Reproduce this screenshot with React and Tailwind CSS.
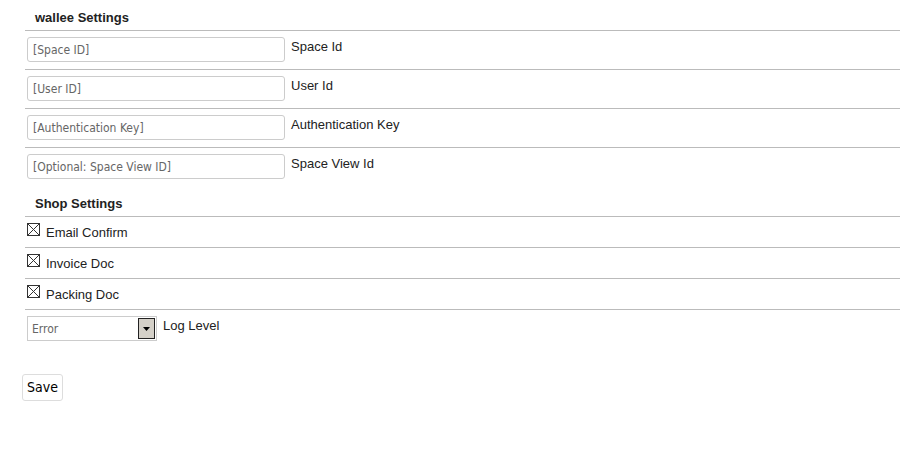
const fields = [
  { ph: '[Space ID]', label: 'Space Id' },
  { ph: '[User ID]', label: 'User Id' },
  { ph: '[Authentication Key]', label: 'Authentication Key' },
  { ph: '[Optional: Space View ID]', label: 'Space View Id' },
]

const checks = ['Email Confirm', 'Invoice Doc', 'Packing Doc']

const inputFont = "font-['DejaVu_Sans_Condensed','DejaVu_Sans',sans-serif]"

function CrossBox() {
  return (
    <svg width="13" height="13" viewBox="0 0 13 13" className="shrink-0">
      <rect x="0.5" y="0.5" width="12" height="12" fill="white" stroke="#333" />
      <path d="M1 1L12 12M12 1L1 12" stroke="#333" strokeWidth="1" />
    </svg>
  )
}

export default function App() {
  return (
    <div className="w-[900px] h-[450px] bg-white font-['Liberation_Sans',Arial,sans-serif] text-[13px] text-[#222]">
      <div className="pl-[25px]">
        <h3 className="pl-[10px] pt-[10px] h-[31px] font-bold text-[13px] leading-[15px] border-b border-[#bbb]">
          wallee Settings
        </h3>
        <div className="divide-y divide-[#bbb]">
          {fields.map((f) => (
            <div key={f.label} className="h-[39px] flex items-start pl-[2px] pt-[6px]">
              <input
                placeholder={f.ph}
                className={`w-[258px] h-[25px] px-[5px] border border-[#ccc] rounded-[3px] text-[12px] placeholder:text-[#666] outline-none ${inputFont}`}
              />
              <span className="ml-[6px] leading-[15px] pt-[2px]">{f.label}</span>
            </div>
          ))}
        </div>
        <h3 className="pl-[10px] pt-[9px] h-[30px] font-bold text-[13px] leading-[15px] border-b border-[#bbb]">
          Shop Settings
        </h3>
        {checks.map((c) => (
          <div key={c} className="h-[31px] border-b border-[#bbb] flex items-start pl-[2px] pt-[6px] gap-[6px]">
            <CrossBox />
            <span className="leading-[15px] pt-[2px]">{c}</span>
          </div>
        ))}
        <div className="flex items-start pl-[2px] pt-[6px]">
          <div className={`w-[130px] h-[25px] border border-[#ccc] flex items-center justify-between pl-[4px] pr-[1px] text-[12px] text-[#666] ${inputFont}`}>
            <span>Error</span>
            <span className="w-[17px] h-[21px] bg-[#d4d0c8] border border-[#222] flex items-center justify-center">
              <svg width="7" height="4" viewBox="0 0 7 4"><path d="M0 0H7L3.5 4Z" fill="#000" /></svg>
            </span>
          </div>
          <span className="ml-[6px] leading-[15px] pt-[2px]">Log Level</span>
        </div>
      </div>
      <div className="pl-[22px] pt-[33px]">
        <button className={`h-[27px] px-[4px] border border-[#ddd] rounded-[3px] bg-white text-[14px] text-black ${inputFont}`}>
          Save
        </button>
      </div>
    </div>
  )
}
